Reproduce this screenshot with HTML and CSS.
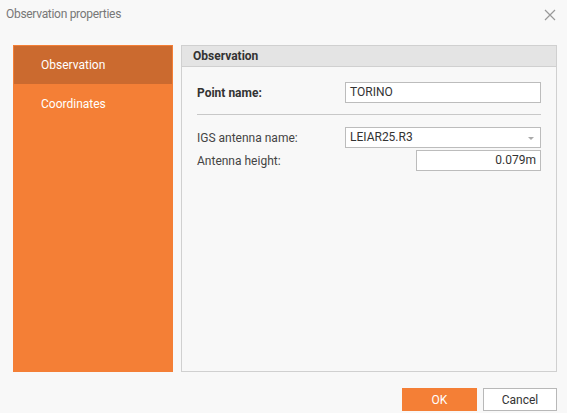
FILE: index.html
```html
<!DOCTYPE html>
<html>
<head>
<meta charset="utf-8">
<link rel="stylesheet" href="styles.css">
</head>
<body>
<div class="dialog">
  <div class="titlebar">
    <span class="title">Observation properties</span>
    <svg class="close" width="12" height="12" viewBox="0 0 12 12"><path d="M1 1L11 11M11 1L1 11" stroke="#999" stroke-width="1.2" fill="none"/></svg>
  </div>
  <div class="content">
    <nav class="sidebar">
      <div class="nav-item active">Observation</div>
      <div class="nav-item">Coordinates</div>
    </nav>
    <section class="panel">
      <div class="panel-header">Observation</div>
      <div class="panel-body">
        <div class="row first">
          <label class="bold">Point name:</label>
          <div class="input wide">TORINO</div>
        </div>
        <div class="sep"></div>
        <div class="row">
          <label>IGS antenna name:</label>
          <div class="input wide select">LEIAR25.R3<span class="caret"></span></div>
        </div>
        <div class="row second">
          <label>Antenna height:</label>
          <div class="input short">0.079m</div>
        </div>
      </div>
    </section>
  </div>
  <div class="footer">
    <button class="btn ok">OK</button>
    <button class="btn cancel">Cancel</button>
  </div>
</div>
</body>
</html>
```
FILE: styles.css
```css
html, body {
  margin: 0;
  padding: 0;
  background: #f8f8f8;
  font-family: Roboto, "Liberation Sans", sans-serif;
  font-size: 12px;
  color: #333;
}
.dialog {
  width: 567px;
  height: 413px;
  display: flex;
  flex-direction: column;
}
.titlebar {
  height: 45px;
  display: flex;
  align-items: flex-start;
  justify-content: space-between;
  padding: 7px 11px 0 6px;
  box-sizing: border-box;
}
.title {
  color: #777;
  font-size: 12px;
  letter-spacing: -0.3px;
}
.close {
  margin-top: 2px;
}
.content {
  display: flex;
  padding: 0 10px 0 13px;
  height: 327px;
  gap: 8px;
}
.sidebar {
  width: 160px;
  background: #f47f36;
  padding: 1px;
  box-sizing: border-box;
}
.nav-item {
  height: 38px;
  line-height: 38px;
  padding-left: 27px;
  color: #fff;
  font-size: 12px;
  margin-bottom: 1px;
}
.nav-item.active {
  background: #cb6a2f;
}
.panel {
  flex: 1;
  border: 1px solid #d0d0d0;
  background: #f8f8f8;
  display: flex;
  flex-direction: column;
}
.panel-header {
  height: 20px;
  line-height: 20px;
  background: #e4e4e4;
  border-bottom: 1px solid #d0d0d0;
  padding-left: 11px;
  font-weight: bold;
  color: #333;
}
.panel-body {
  padding: 15px 15px 0 15px;
}
.row {
  display: flex;
  align-items: center;
  justify-content: space-between;
  height: 21px;
}
.row.second {
  margin-top: 2px;
}
label {
  color: #444;
}
label.bold {
  font-weight: bold;
  color: #333;
}
.input {
  height: 21px;
  box-sizing: border-box;
  border: 1px solid #bcbcbc;
  background: #fff;
  line-height: 19px;
  padding: 0 4px;
  color: #333;
  position: relative;
}
.input.wide {
  width: 196px;
}
.input.short {
  width: 125px;
  text-align: right;
}
.caret {
  position: absolute;
  right: 6px;
  top: 9px;
  width: 0;
  height: 0;
  border-left: 3px solid transparent;
  border-right: 3px solid transparent;
  border-top: 3px solid #aaa;
}
.sep {
  height: 1px;
  background: #c8c8c8;
  margin: 11px 0 12px 0;
}
.footer {
  display: flex;
  justify-content: flex-end;
  gap: 6px;
  padding: 16px 10px 0 0;
}
.btn {
  height: 23px;
  font-family: Roboto, "Liberation Sans", sans-serif;
  font-size: 12px;
  box-sizing: border-box;
  padding: 0;
  cursor: pointer;
}
.ok {
  width: 75px;
  background: #f47f36;
  border: none;
  color: #fff;
}
.cancel {
  width: 74px;
  background: #fff;
  border: 1px solid #b8b8b8;
  color: #333;
}
```
